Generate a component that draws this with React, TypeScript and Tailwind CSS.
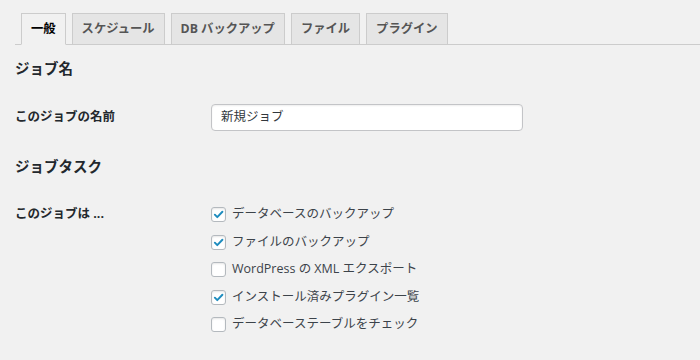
import React from 'react';

const font = "font-['Open_Sans','Noto_Sans_CJK_JP',sans-serif]";

const tabs = ['一般', 'スケジュール', 'DB バックアップ', 'ファイル', 'プラグイン'];

const tasks = [
  { label: 'データベースのバックアップ', checked: true },
  { label: 'ファイルのバックアップ', checked: true },
  { label: 'WordPress の XML エクスポート', checked: false },
  { label: 'インストール済みプラグイン一覧', checked: true },
  { label: 'データベーステーブルをチェック', checked: false },
];

const Checkbox: React.FC<{ checked: boolean }> = ({ checked }) => (
  <span className="w-[15px] h-[15px] shrink-0 rounded-[3px] border border-[#b4b9be] bg-white shadow-[inset_0_1px_2px_rgba(0,0,0,0.1)] flex items-center justify-center">
    {checked && (
      <svg width="13" height="13" viewBox="0 0 16 16">
        <path d="M3.5 8.2l3 3L12.8 4.6" fill="none" stroke="#1e8cbe" strokeWidth="2.4" strokeLinecap="round" strokeLinejoin="round" />
      </svg>
    )}
  </span>
);

const App: React.FC = () => {
  return (
    <div className={`min-h-screen w-[700px] h-[360px] overflow-hidden bg-[#f1f1f1] text-[#23282d] ${font}`}>
      {/* tabs */}
      <div className="pt-[13px] pl-[15px]">
        <div className="flex items-end gap-[6px] pl-[6px] border-b border-[#ccc]">
          {tabs.map((t, i) => (
            <div
              key={t}
              className={`-mb-px h-[32px] px-[9px] flex items-center border border-[#ccc] text-[12.3px] font-bold whitespace-nowrap ${
                i === 0 ? 'bg-[#f1f1f1] border-b-[#f1f1f1] text-[#000]' : 'bg-[#e5e5e5] text-[#555]'
              }`}
            >
              {t}
            </div>
          ))}
        </div>
      </div>

      <div className="px-[15px]">
        <h2 className="mt-[14px] text-[14.5px] leading-[20px] font-bold">ジョブ名</h2>

        <div className="mt-[25px] flex items-center">
          <div className="w-[196px] text-[12.5px] font-bold">このジョブの名前</div>
          <div className="w-[312px] h-[27px] rounded-[4px] border border-[#c3c4c7] bg-white shadow-[inset_0_1px_2px_rgba(0,0,0,0.07)] flex items-center px-[9px] text-[12.5px] text-[#32373c]">
            新規ジョブ
          </div>
        </div>

        <h2 className="mt-[26px] text-[14.5px] leading-[20px] font-bold">ジョブタスク</h2>

        <div className="mt-[24px] flex">
          <div className="w-[196px] h-[27.5px] flex items-center text-[12.5px] font-bold">このジョブは ...</div>
          <div className="flex flex-col">
            {tasks.map((t) => (
              <label key={t.label} className="h-[27.5px] flex items-center gap-[6px] text-[12.5px] text-[#3c434a]">
                <Checkbox checked={t.checked} />
                <span>{t.label}</span>
              </label>
            ))}
          </div>
        </div>
      </div>
    </div>
  );
};

export default App;
